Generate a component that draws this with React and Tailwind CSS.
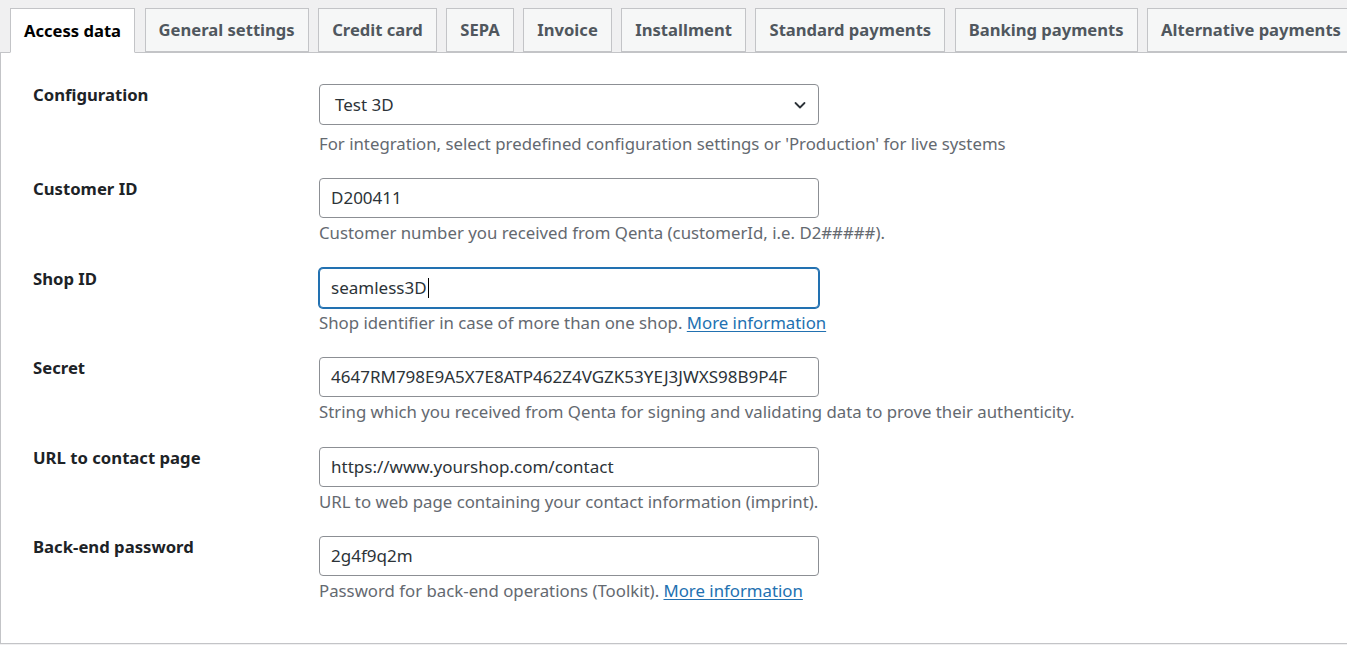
import React from 'react'

const tabs = [
  'Access data',
  'General settings',
  'Credit card',
  'SEPA',
  'Invoice',
  'Installment',
  'Standard payments',
  'Banking payments',
  'Alternative payments',
]

function Chevron() {
  return (
    <svg width="16" height="16" viewBox="0 0 16 16" fill="none">
      <path d="M3.5 6l4.5 4.5L12.5 6" stroke="#2c3338" strokeWidth="1.8" strokeLinecap="round" strokeLinejoin="round" />
    </svg>
  )
}

function TextInput({ value, focused }) {
  if (focused) {
    return (
      <div className="flex h-[40px] w-[500px] items-center rounded-[4px] border border-[#2271b1] bg-white px-[11px] text-[17px] text-[#2c3338] shadow-[0_0_0_1px_#2271b1]">
        <span>{value}</span>
        <span className="ml-px inline-block h-[20px] w-px bg-black" />
      </div>
    )
  }
  return (
    <div className="flex h-[40px] w-[500px] items-center rounded-[4px] border border-[#8c8f94] bg-white px-[11px] text-[17px] text-[#2c3338]">
      {value}
    </div>
  )
}

function Link({ children }) {
  return <a href="#" className="text-[#2271b1] underline underline-offset-2">{children}</a>
}

function Row({ label, children, desc, first }) {
  return (
    <div className={`flex items-start ${first ? 'pb-[22px]' : 'pb-[22.5px]'}`}>
      <div className="w-[286px] shrink-0 text-[16.7px] font-bold leading-[22px] text-[#1d2327]">
        {label}
      </div>
      <div className="flex flex-col">
        {children}
        <div className={`${first ? 'mt-[7px]' : 'mt-[3px]'} h-[24px] whitespace-nowrap text-[16.8px] leading-[24px] text-[#646970]`}>{desc}</div>
      </div>
    </div>
  )
}

export default function App() {
  return (
    <div className="min-h-[645px] overflow-hidden bg-[#f0f0f1] font-['Noto_Sans',sans-serif]">
      <div className="flex gap-[9.5px] pl-[10px] pt-[8px]">
        {tabs.map((t, i) => (
          <div
            key={t}
            className={
              i === 0
                ? 'relative z-10 -mb-px flex h-[45px] shrink-0 items-center whitespace-nowrap border border-b-white border-[#c3c4c7] bg-white px-[13px] pt-px text-[16.6px] font-bold text-[#000]'
                : 'flex h-[44px] shrink-0 items-center whitespace-nowrap border border-[#c3c4c7] bg-[#f6f7f7] px-[13px] pt-px text-[16.6px] font-bold text-[#50575e]'
            }
          >
            {t}
          </div>
        ))}
      </div>
      <div className="h-[592px] border-b border-l border-t border-[#c3c4c7] bg-white pl-[32px] pt-[31px]">
        <Row first label="Configuration" desc="For integration, select predefined configuration settings or 'Production' for live systems">
          <div className="flex h-[41px] w-[500px] items-center justify-between rounded-[4px] border border-[#8c8f94] bg-white pl-[15px] pr-[10px] text-[17px] text-[#2c3338]">
            <span>Test 3D</span>
            <Chevron />
          </div>
        </Row>
        <Row label="Customer ID" desc="Customer number you received from Qenta (customerId, i.e. D2#####).">
          <TextInput value="D200411" />
        </Row>
        <Row label="Shop ID" desc={<>Shop identifier in case of more than one shop. <Link>More information</Link></>}>
          <TextInput value="seamless3D" focused />
        </Row>
        <Row label="Secret" desc="String which you received from Qenta for signing and validating data to prove their authenticity.">
          <TextInput value="4647RM798E9A5X7E8ATP462Z4VGZK53YEJ3JWXS98B9P4F" />
        </Row>
        <Row label="URL to contact page" desc="URL to web page containing your contact information (imprint).">
          <TextInput value="https://www.yourshop.com/contact" />
        </Row>
        <Row label="Back-end password" desc={<>Password for back-end operations (Toolkit). <Link>More information</Link></>}>
          <TextInput value="2g4f9q2m" />
        </Row>
      </div>
    </div>
  )
}
